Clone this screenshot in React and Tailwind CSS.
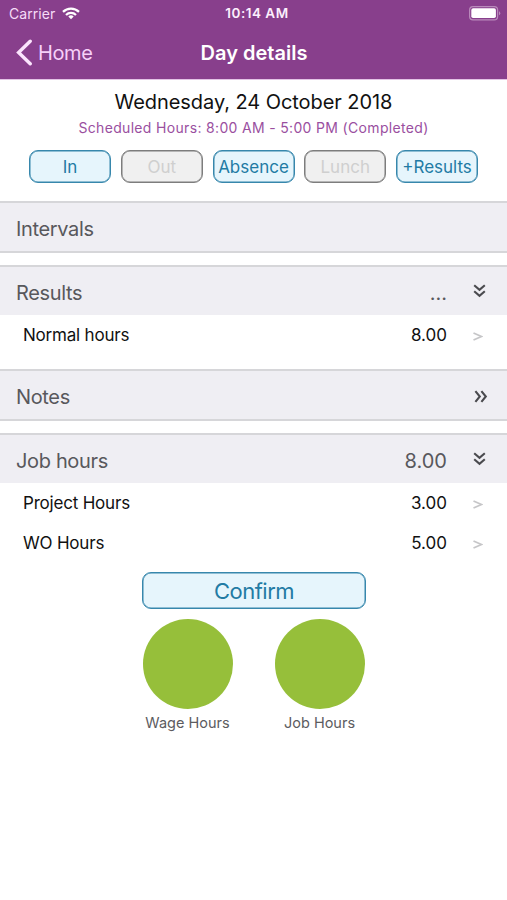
const ACTIONS = [
  { label: "In", enabled: true },
  { label: "Out", enabled: false },
  { label: "Absence", enabled: true },
  { label: "Lunch", enabled: false },
  { label: "+Results", enabled: true },
];

function StatusBar() {
  return (
    <div className="grid h-[27px] grid-cols-3 items-center pl-[9px] pr-[6px] text-[14px] leading-none">
      <div className="flex items-center gap-[7px] text-[#f6dcf8]">
        <span className="tracking-[0.05px]">Carrier</span>
        <svg width="18" height="13" viewBox="0 0 18 13" fill="none" stroke="#fff" strokeWidth="2.2">
          <path d="M1 4.9a11.3 11.3 0 0 1 16 0" />
          <path d="M4 8a7.1 7.1 0 0 1 10 0" />
          <path d="M9 12.3 6.3 9.6a3.8 3.8 0 0 1 5.4 0z" fill="#fff" stroke="none" />
        </svg>
      </div>
      <span className="pt-px pl-1 text-center font-semibold tracking-[0.5px] text-[13.5px] text-[#fceffd]">10:14 AM</span>
      <svg className="justify-self-end" width="32" height="15" viewBox="0 0 32 15">
        <rect x="0.6" y="0.6" width="28" height="13.2" rx="3.4" fill="none" stroke="#b98abb" strokeWidth="1.2" />
        <rect x="2.3" y="2.3" width="24.6" height="9.8" rx="1.8" fill="#fff" />
        <path d="M30 5.2a2.2 2.2 0 0 1 0 4z" fill="#b98abb" />
      </svg>
    </div>
  );
}

function NavBar() {
  return (
    <div className="grid h-[51px] grid-cols-3 items-center">
      <button className="flex items-center gap-[6px] pl-4 text-[20px] leading-none tracking-[-0.4px] text-[#f6d0f9]">
        <svg width="16" height="27" viewBox="0 0 16 27" fill="none" stroke="#fbe4fd" strokeWidth="3.4" strokeLinecap="round">
          <path d="M14.2 2.2 2.6 13.5l11.6 11.3" />
        </svg>
        Home
      </button>
      <h1 className="pl-px text-center text-[20px] font-semibold leading-none text-white">Day details</h1>
    </div>
  );
}

function DoubleDown() {
  return (
    <svg className="mb-1" width="13" height="14" viewBox="0 0 13 14" fill="none" stroke="#4a4a4e" strokeWidth="2.1">
      <path d="m1.2 1.2 5.3 4.6 5.3-4.6M1.2 7.2l5.3 4.6 5.3-4.6" />
    </svg>
  );
}

function DoubleRight() {
  return (
    <svg className="ml-1 mb-px" width="14" height="13" viewBox="0 0 14 13" fill="none" stroke="#4a4a4e" strokeWidth="2.1">
      <path d="m1.4 1.2 4.4 5.3-4.4 5.3M7.4 1.2l4.4 5.3-4.4 5.3" />
    </svg>
  );
}

function SectionHeader({ title, value, icon, className = "" }) {
  return (
    <div className={`flex items-center border-t-2 border-[#d6d6d9] bg-[#efeef3] pl-4 text-[20px] leading-6 text-[#58585c] ${className}`}>
      <span className="flex-1 tracking-[-0.35px]">{title}</span>
      <span>{value}</span>
      <span className="flex w-[60px] justify-center pl-1">{icon}</span>
    </div>
  );
}

function HoursRow({ label, value }) {
  return (
    <div className="flex h-10 items-center pl-[23px] pt-px text-[17px] text-[#111]">
      <span className="flex-1 tracking-[-0.2px]">{label}</span>
      <span>{value}</span>
      <span className="flex w-[60px] justify-center pl-px pt-px">
        <svg width="10" height="9" viewBox="0 0 10 9" fill="none" stroke="#c6c6c8" strokeWidth="1.8">
          <path d="m.5 1 8 3.5-8 3.5" />
        </svg>
      </span>
    </div>
  );
}

function Total({ label }) {
  return (
    <div className="flex w-[90px] flex-col items-center">
      <div className="size-[90px] rounded-full bg-[#96bf3a]" />
      <span className="mt-[4px] whitespace-nowrap text-[14.5px] leading-5 text-[#5c5c60]">{label}</span>
    </div>
  );
}

export default function App() {
  return (
    <div className="flex min-h-[900px] w-[507px] flex-col bg-white font-['Inter','Liberation_Sans',sans-serif]">
      <header className="h-[79px] bg-[#883f8c]">
        <StatusBar />
        <NavBar />
      </header>

      <div className="flex h-[122px] flex-col items-center border-t border-[#e3c3e5]">
        <h2 className="mt-[10px] text-[20px] leading-6 tracking-[-0.06px] text-[#111]">Wednesday, 24 October 2018</h2>
        <p className="mt-1 text-[14px] leading-5 tracking-[0.33px] text-[#9a4f9f]">
          Scheduled Hours: 8:00 AM - 5:00 PM (Completed)
        </p>
        <div className="mt-3 flex gap-[9.75px]">
          {ACTIONS.map((a) => (
            <button
              key={a.label}
              disabled={!a.enabled}
              className={`h-[33px] w-[82px] rounded-[9px] border pt-[2px] text-[17px] leading-none ${
                a.enabled
                  ? "border-[#3787ac] bg-[#e6f5fc] text-[#227ba4] shadow-[inset_0_0_0_0.5px_#3787ac]"
                  : "border-[#7d7d7d] bg-[#f0f0f0] text-[#cfcfcf] shadow-[inset_0_0_0_0.5px_#7d7d7d]"
              }`}
            >
              {a.label}
            </button>
          ))}
        </div>
      </div>

      <SectionHeader title="Intervals" className="h-[52px] border-b-2 pt-1" />

      <div className="mt-3 h-[104px]">
        <SectionHeader title="Results" value="..." icon={<DoubleDown />} className="h-[50px] pt-1" />
        <HoursRow label="Normal hours" value="8.00" />
      </div>

      <SectionHeader title="Notes" icon={<DoubleRight />} className="h-[52px] border-b-2 pt-1" />

      <div className="mt-3">
        <SectionHeader title="Job hours" value="8.00" icon={<DoubleDown />} className="h-[50px] pt-1" />
        <HoursRow label="Project Hours" value="3.00" />
        <HoursRow label="WO Hours" value="5.00" />
      </div>

      <div className="mt-[9px] flex flex-col items-center">
        <button className="h-[37px] w-[224px] rounded-[9px] border border-[#3787ac] bg-[#e6f5fc] pl-px text-[22px] leading-none tracking-[-0.5px] text-[#227ba4] shadow-[inset_0_0_0_0.5px_#3787ac]">
          Confirm
        </button>
        <div className="mt-[10px] flex gap-[42px]">
          <Total label="Wage Hours" />
          <Total label="Job Hours" />
        </div>
      </div>
    </div>
  );
}
